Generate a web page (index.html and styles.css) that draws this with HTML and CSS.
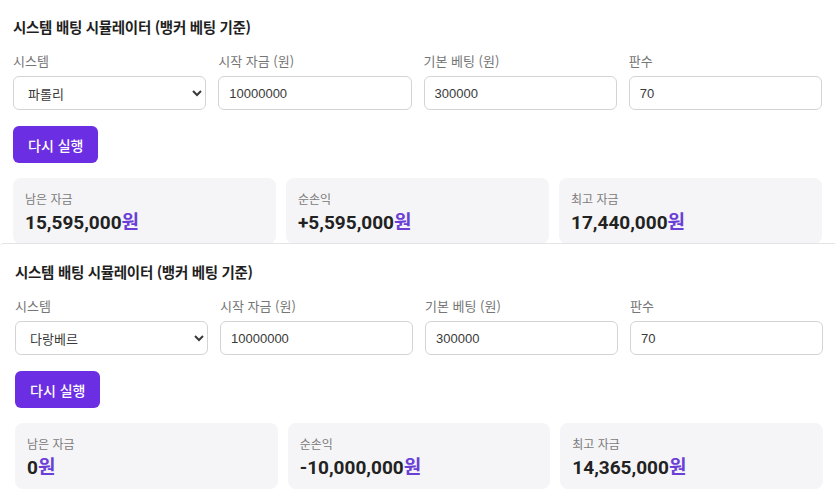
FILE: index.html
```html
<!DOCTYPE html>
<html lang="ko">
<head>
<meta charset="utf-8">
<title>시스템 배팅 시뮬레이터</title>
<link rel="stylesheet" href="styles.css">
</head>
<body>
  <section class="sim sim-first">
    <h2 class="sim-title">시스템 배팅 시뮬레이터 (뱅커 베팅 기준)</h2>
    <div class="fields">
      <label class="field">
        <span class="field-label">시스템</span>
        <select class="control">
          <option selected>파롤리</option>
          <option>다랑베르</option>
          <option>마틴게일</option>
        </select>
      </label>
      <label class="field">
        <span class="field-label">시작 자금 (원)</span>
        <input class="control" type="text" value="10000000">
      </label>
      <label class="field">
        <span class="field-label">기본 베팅 (원)</span>
        <input class="control" type="text" value="300000">
      </label>
      <label class="field">
        <span class="field-label">판수</span>
        <input class="control" type="text" value="70">
      </label>
    </div>
    <button class="run-btn" type="button">다시 실행</button>
    <div class="stats">
      <div class="stat">
        <div class="stat-label">남은 자금</div>
        <div class="stat-value">15,595,000<span class="unit">원</span></div>
      </div>
      <div class="stat">
        <div class="stat-label">순손익</div>
        <div class="stat-value">+5,595,000<span class="unit">원</span></div>
      </div>
      <div class="stat">
        <div class="stat-label">최고 자금</div>
        <div class="stat-value">17,440,000<span class="unit">원</span></div>
      </div>
    </div>
  </section>

  <section class="sim sim-second">
    <h2 class="sim-title">시스템 배팅 시뮬레이터 (뱅커 베팅 기준)</h2>
    <div class="fields">
      <label class="field">
        <span class="field-label">시스템</span>
        <select class="control">
          <option>파롤리</option>
          <option selected>다랑베르</option>
          <option>마틴게일</option>
        </select>
      </label>
      <label class="field">
        <span class="field-label">시작 자금 (원)</span>
        <input class="control" type="text" value="10000000">
      </label>
      <label class="field">
        <span class="field-label">기본 베팅 (원)</span>
        <input class="control" type="text" value="300000">
      </label>
      <label class="field">
        <span class="field-label">판수</span>
        <input class="control" type="text" value="70">
      </label>
    </div>
    <button class="run-btn" type="button">다시 실행</button>
    <div class="stats">
      <div class="stat">
        <div class="stat-label">남은 자금</div>
        <div class="stat-value">0<span class="unit">원</span></div>
      </div>
      <div class="stat">
        <div class="stat-label">순손익</div>
        <div class="stat-value">-10,000,000<span class="unit">원</span></div>
      </div>
      <div class="stat">
        <div class="stat-label">최고 자금</div>
        <div class="stat-value">14,365,000<span class="unit">원</span></div>
      </div>
    </div>
  </section>
</body>
</html>
```
FILE: styles.css
```css
* {
  box-sizing: border-box;
}

html, body {
  margin: 0;
  padding: 0;
  background: #ffffff;
}

body {
  font-family: "Noto Sans CJK KR", "Noto Sans", sans-serif;
  color: #222222;
  overflow: hidden;
}

.sim {
  padding: 16px 13px 0 13px;
}

.sim-first {
  height: 243px;
  overflow: hidden;
}

.sim-second {
  padding: 17px 12px 0 15px;
  border-top: 1px solid #e4e4e7;
  border-top-left-radius: 4px;
}

.sim-title {
  margin: 0;
  font-size: 14.5px;
  line-height: 22px;
  font-weight: 700;
  color: #1f1f1f;
  letter-spacing: -0.3px;
}

.fields {
  display: grid;
  grid-template-columns: repeat(4, 1fr);
  column-gap: 12px;
  margin-top: 14px;
}

.field {
  display: flex;
  flex-direction: column;
}

.field-label {
  font-size: 13px;
  line-height: 18px;
  color: #767676;
  margin-bottom: 6px;
}

.control {
  height: 34px;
  width: 100%;
  border: 1px solid #d4d4d8;
  border-radius: 6px;
  background: #ffffff;
  padding: 0 10px;
  font-family: "Liberation Sans", "Noto Sans CJK KR", sans-serif;
  font-size: 13px;
  color: #3a3a3a;
  outline: none;
}

select.control {
  padding: 0 8px 0 10px;
  font-family: "Noto Sans CJK KR", "Liberation Sans", sans-serif;
}

.run-btn {
  display: block;
  margin-top: 16px;
  height: 37px;
  padding: 0 15px;
  border: none;
  border-radius: 6px;
  background: #6c2ee2;
  color: #ffffff;
  font-family: "Noto Sans CJK KR", sans-serif;
  font-size: 14px;
  font-weight: 500;
}

.stats {
  display: grid;
  grid-template-columns: repeat(3, 1fr);
  column-gap: 10px;
  margin-top: 15px;
}

.stat {
  background: #f5f5f7;
  border-radius: 8px;
  padding: 12px 12px 8px 12px;
}

.stat-label {
  font-size: 12px;
  line-height: 18px;
  color: #7a7a7a;
}

.stat-value {
  font-family: "Roboto", "Noto Sans CJK KR", sans-serif;
  font-size: 19px;
  line-height: 26px;
  font-weight: 700;
  color: #222222;
}

.stat-value .unit {
  font-family: "Noto Sans CJK KR", sans-serif;
  color: #6b3fd6;
}
```
